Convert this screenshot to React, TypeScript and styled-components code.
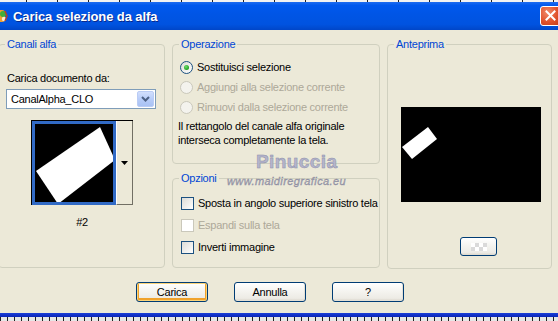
import React from "react";
import styled, { createGlobalStyle } from "styled-components";

const Global = createGlobalStyle`
  html, body { margin: 0; padding: 0; background: #ECE9D8; }
  body { font-family: "Liberation Sans", Arial, sans-serif; font-size: 11px; }
  #root { width: 558px; height: 321px; overflow: hidden; }
`;

const Screen = styled.div`
  position: relative;
  width: 558px;
  height: 321px;
  overflow: hidden;
  display: flex;
  flex-direction: column;
  background: #ECE9D8;
  font-family: "Liberation Sans", Arial, sans-serif;
  font-size: 11px;
  letter-spacing: -0.25px;
  color: #000;
`;

const TopRuler = styled.div`
  flex: none;
  height: 2px;
  background-color: #F2F2F2;
  background-image: repeating-linear-gradient(90deg, transparent 0 26px, #222 26px 27px, transparent 27px 31px);
`;

const TitleBar = styled.div`
  flex: none;
  height: 28px;
  display: flex;
  align-items: center;
  background: linear-gradient(#1E6CF0 0%, #0058EE 12%, #0055E5 45%, #0053E0 80%, #0046C8 100%);
`;

const AppIcon = styled.svg`
  flex: none;
  margin-left: -8px;
  margin-right: 5px;
  width: 16px;
  height: 16px;
`;

const TitleText = styled.span`
  font-family: "Liberation Sans", Arial, sans-serif;
  font-weight: bold;
  font-size: 13px;
  color: #fff;
  text-shadow: 1px 1px 0 #0A2A8C;
  letter-spacing: -0.1px;
`;

const CloseBtn = styled.div`
  margin-left: auto;
  margin-right: -3px;
  width: 21px;
  height: 20px;
  box-sizing: border-box;
  border: 1px solid #fff;
  border-radius: 3px;
  background: radial-gradient(circle at 35% 30%, #F08A6A, #E0512B 55%, #C23A16);
  display: flex;
  align-items: center;
  justify-content: center;
  margin-top: -1px;
`;

const Body = styled.div`
  flex: 1;
  display: flex;
  flex-direction: column;
  padding-top: 8px;
`;

const Panels = styled.div`
  display: flex;
  gap: 7px;
  margin-left: -2px;
`;

const Group = styled.fieldset<{ $w: number; $h: number }>`
  margin: 0;
  padding: 0;
  min-width: 0;
  width: ${p => p.$w}px;
  height: ${p => p.$h}px;
  box-sizing: border-box;
  border: 1px solid #D0D0BF;
  border-radius: 4px;
`;

const Legend = styled.legend`
  margin-left: 6px;
  padding: 0 2px;
  color: #0046D5;
  font-size: 11px;
  line-height: 13px;
`;

const Column = styled.div`
  display: flex;
  flex-direction: column;
  gap: 8px;
`;

const LeftContent = styled.div`
  display: flex;
  flex-direction: column;
  padding: 0 8px;
`;

const Label = styled.div`
  margin-top: 21px;
  line-height: 13px;
`;

const Select = styled.div`
  margin-top: 4px;
  margin-left: -1px;
  width: 150px;
  height: 20px;
  box-sizing: border-box;
  border: 1px solid #7F9DB9;
  background: #fff;
  display: flex;
  align-items: center;
  padding: 1px;
`;

const SelectText = styled.span`
  flex: 1;
  padding-left: 3px;
`;

const SelectBtn = styled.span`
  width: 17px;
  height: 16px;
  box-sizing: border-box;
  border-radius: 2px;
  border: 1px solid #BACCF5;
  background: linear-gradient(#D2DFFD, #B8CDF9 50%, #A9C2F4);
  display: flex;
  align-items: center;
  justify-content: center;
`;

const Picker = styled.div`
  margin-top: 11px;
  align-self: center;
  display: flex;
  border-top: 1px solid #000;
  border-left: 1px solid #000;
`;

const Thumb = styled.div`
  width: 84px;
  height: 84px;
  box-sizing: border-box;
  border: 3px solid #316AC5;
  background: #000;
  overflow: hidden;
`;

const ArrowCell = styled.div`
  width: 17px;
  box-sizing: border-box;
  border-left: 1px solid #fff;
  border-right: 1px solid #716F64;
  border-bottom: 1px solid #716F64;
  display: flex;
  align-items: center;
  justify-content: center;
`;

const Caption = styled.div`
  margin-top: 11px;
  text-align: center;
  line-height: 13px;
  padding-left: 1px;
`;

const OpContent = styled.div`
  display: flex;
  flex-direction: column;
  padding: 6px 0 0 5px;
`;

const OptRow = styled.div<{ $h: number; $disabled?: boolean; $indent: number }>`
  height: ${p => p.$h}px;
  display: flex;
  align-items: center;
  gap: 4px;
  white-space: nowrap;
  margin-left: ${p => p.$indent}px;
  color: ${p => (p.$disabled ? "#ACA899" : "#000")};
`;

const Radio = styled.span<{ $disabled?: boolean }>`
  flex: none;
  width: 13px;
  height: 13px;
  box-sizing: border-box;
  border-radius: 50%;
  border: 1px solid ${p => (p.$disabled ? "#CAC8BB" : "#1C5180")};
  background: ${p => (p.$disabled ? "#F4F3EE" : "linear-gradient(135deg, #DCDCD7, #FFFFFF)")};
  display: flex;
  align-items: center;
  justify-content: center;
`;

const RadioDot = styled.span`
  width: 5px;
  height: 5px;
  border-radius: 50%;
  background: radial-gradient(circle at 40% 35%, #6EDC6E, #21A121 70%);
`;

const Desc = styled.div`
  margin-top: 2px;
  line-height: 14px;
  white-space: nowrap;
`;

const OptContent = styled.div`
  display: flex;
  flex-direction: column;
  padding: 7px 0 0 0;
`;

const Check = styled.span<{ $disabled?: boolean }>`
  flex: none;
  width: 13px;
  height: 13px;
  box-sizing: border-box;
  border: 1px solid ${p => (p.$disabled ? "#CAC8BB" : "#1C5180")};
  background: ${p => (p.$disabled ? "#FFFFFF" : "linear-gradient(135deg, #DCDCD7, #FFFFFF)")};
`;

const PreviewContent = styled.div`
  display: flex;
  flex-direction: column;
  padding-left: 13px;
`;

const Preview = styled.div`
  margin-top: 56px;
  width: 140px;
  height: 95px;
  background: #000;
`;

const SmallBtn = styled.div`
  margin-top: 35px;
  margin-left: 59px;
  width: 37px;
  height: 19px;
  box-sizing: border-box;
  border: 1px solid #003C74;
  border-radius: 3px;
  background: linear-gradient(#FFFFFF, #F4F4F0 45%, #ECEBE6 85%, #DCD8CC);
  display: flex;
  align-items: center;
  justify-content: center;
`;

const Buttons = styled.div`
  margin-top: 13px;
  padding-left: 136px;
  display: flex;
  gap: 26px;
`;

const Btn = styled.div<{ $default?: boolean }>`
  width: 72px;
  height: 20px;
  box-sizing: border-box;
  border: 1px solid #003C74;
  border-radius: 3px;
  background: linear-gradient(#FFFFFF, #F5F4F0 45%, #EDEBE5 85%, #D8D3C8);
  display: flex;
  align-items: center;
  justify-content: center;
  font-size: 11px;
  box-shadow: ${p =>
    p.$default
      ? "inset 0 0 0 1px #FBD47A, inset 0 -1px 0 2px #F0A22C"
      : "inset -1px -1px 0 #E3E0D6"};
`;

const BottomBorder = styled.div`
  flex: none;
  height: 4px;
  background: linear-gradient(#1A3FD8, #0A24B8);
`;

const BottomRuler = styled.div`
  flex: none;
  height: 4px;
  background-color: #E6E6E6;
  background-image: repeating-linear-gradient(90deg, #222 0 1px, transparent 1px 7px);
`;

const Watermark = styled.div`
  position: absolute;
  left: 0;
  top: 0;
  pointer-events: none;
`;

const WmName = styled.div`
  position: absolute;
  left: 256px;
  top: 151px;
  font-family: "Liberation Sans", Arial, sans-serif;
  font-size: 19px;
  font-weight: bold;
  letter-spacing: 0.4px;
  color: #B4B5CC;
  -webkit-text-stroke: 0.5px #8F90AA;
  white-space: nowrap;
`;

const WmUrl = styled.div`
  position: absolute;
  left: 227px;
  top: 175px;
  font-family: "Liberation Sans", Arial, sans-serif;
  font-size: 11px;
  font-style: italic;
  letter-spacing: 0.4px;
  color: #A2A2B2;
  -webkit-text-stroke: 0.3px #86869A;
  white-space: nowrap;
`;

export default function App() {
  return (
    <>
      <Global />
      <Screen>
        <TopRuler />
        <TitleBar>
          <AppIcon viewBox="0 0 16 16">
            <rect x="1" y="2" width="12" height="12" rx="3" fill="#F0A030" />
            <circle cx="11" cy="6" r="3" fill="#3FAE3A" />
            <circle cx="12" cy="11" r="2.2" fill="#F8F0D0" />
            <path d="M13 3 L15 8 L13 13" stroke="#B0402A" strokeWidth="1.5" fill="none" />
          </AppIcon>
          <TitleText>Carica selezione da alfa</TitleText>
          <CloseBtn>
            <svg width="11" height="11" viewBox="0 0 11 11">
              <path d="M1.5 1.5 L9.5 9.5 M9.5 1.5 L1.5 9.5" stroke="#fff" strokeWidth="2" strokeLinecap="square" />
            </svg>
          </CloseBtn>
        </TitleBar>
        <Body>
          <Panels>
            <Group $w={167} $h={230}>
              <Legend>Canali alfa</Legend>
              <LeftContent>
                <Label>Carica documento da:</Label>
                <Select>
                  <SelectText>CanalAlpha_CLO</SelectText>
                  <SelectBtn>
                    <svg width="9" height="6" viewBox="0 0 9 6">
                      <path d="M1 1 L4.5 4.5 L8 1" stroke="#4D6185" strokeWidth="2" fill="none" />
                    </svg>
                  </SelectBtn>
                </Select>
                <Picker>
                  <Thumb>
                    <svg width="78" height="78" viewBox="0 0 78 78">
                      <polygon points="65,3 80,36 23,80 1,47" fill="#fff" />
                    </svg>
                  </Thumb>
                  <ArrowCell>
                    <svg width="7" height="4" viewBox="0 0 7 4">
                      <polygon points="0,0 7,0 3.5,4" fill="#000" />
                    </svg>
                  </ArrowCell>
                </Picker>
                <Caption>#2</Caption>
              </LeftContent>
            </Group>
            <Column>
              <Group $w={208} $h={126}>
                <Legend>Operazione</Legend>
                <OpContent>
                  <OptRow $h={20} $indent={2}>
                    <Radio>
                      <RadioDot />
                    </Radio>
                    Sostituisci selezione
                  </OptRow>
                  <OptRow $h={20} $indent={2} $disabled>
                    <Radio $disabled />
                    Aggiungi alla selezione corrente
                  </OptRow>
                  <OptRow $h={20} $indent={2} $disabled>
                    <Radio $disabled />
                    Rimuovi dalla selezione corrente
                  </OptRow>
                  <Desc>
                    Il rettangolo del canale alfa originale
                    <br />
                    interseca completamente la tela.
                  </Desc>
                </OpContent>
              </Group>
              <Group $w={208} $h={96}>
                <Legend>Opzioni</Legend>
                <OptContent>
                  <OptRow $h={22} $indent={8}>
                    <Check />
                    Sposta in angolo superiore sinistro tela
                  </OptRow>
                  <OptRow $h={22} $indent={8} $disabled>
                    <Check $disabled />
                    Espandi sulla tela
                  </OptRow>
                  <OptRow $h={22} $indent={8}>
                    <Check />
                    Inverti immagine
                  </OptRow>
                </OptContent>
              </Group>
            </Column>
            <Group $w={165} $h={231}>
              <Legend>Anteprima</Legend>
              <PreviewContent>
                <Preview>
                  <svg width="140" height="95" viewBox="0 0 140 95">
                    <polygon points="27,20 36,32 11,52 1,40" fill="#fff" />
                  </svg>
                </Preview>
                <SmallBtn>
                  <svg width="16" height="8" viewBox="0 0 16 8">
                    <rect x="0" y="0" width="4" height="4" fill="#FFFFFF" />
                    <rect x="4" y="0" width="4" height="4" fill="#DADADA" />
                    <rect x="8" y="0" width="4" height="4" fill="#FFFFFF" />
                    <rect x="12" y="0" width="4" height="4" fill="#DADADA" />
                    <rect x="0" y="4" width="4" height="4" fill="#DADADA" />
                    <rect x="4" y="4" width="4" height="4" fill="#FFFFFF" />
                    <rect x="8" y="4" width="4" height="4" fill="#DADADA" />
                    <rect x="12" y="4" width="4" height="4" fill="#FFFFFF" />
                  </svg>
                </SmallBtn>
              </PreviewContent>
            </Group>
          </Panels>
          <Buttons>
            <Btn $default>Carica</Btn>
            <Btn>Annulla</Btn>
            <Btn>?</Btn>
          </Buttons>
        </Body>
        <BottomBorder />
        <BottomRuler />
        <Watermark>
          <WmName>Pinuccia</WmName>
          <WmUrl>www.maidiregrafica.eu</WmUrl>
        </Watermark>
      </Screen>
    </>
  );
}
